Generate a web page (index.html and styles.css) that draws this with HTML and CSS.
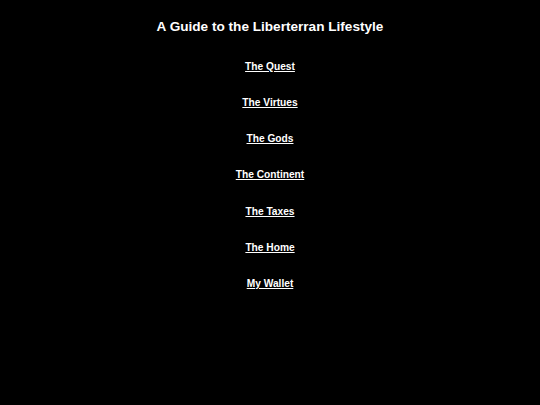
FILE: index.html
```html
<!DOCTYPE html>
<html>
<head>
<meta charset="utf-8">
<link rel="stylesheet" href="styles.css">
</head>
<body>
<h1 class="title">A Guide to the Liberterran Lifestyle</h1>
<nav class="menu">
<a href="#">The Quest</a>
<a href="#">The Virtues</a>
<a href="#">The Gods</a>
<a href="#">The Continent</a>
<a href="#">The Taxes</a>
<a href="#">The Home</a>
<a href="#">My Wallet</a>
</nav>
</body>
</html>
```
FILE: styles.css
```css
html, body {
  margin: 0;
  padding: 0;
  background: #000;
  color: #fff;
  font-family: "Liberation Sans", Arial, sans-serif;
}
body {
  padding-top: 18px;
}
.title {
  margin: 0;
  font-size: 13.6px;
  line-height: 18px;
  font-weight: bold;
  text-align: center;
}
.menu {
  display: flex;
  flex-direction: column;
  align-items: center;
  gap: 23.17px;
  margin-top: 24px;
}
.menu a {
  color: #fff;
  font-size: 10.2px;
  line-height: 13px;
  font-weight: bold;
  text-decoration: underline;
}
```
